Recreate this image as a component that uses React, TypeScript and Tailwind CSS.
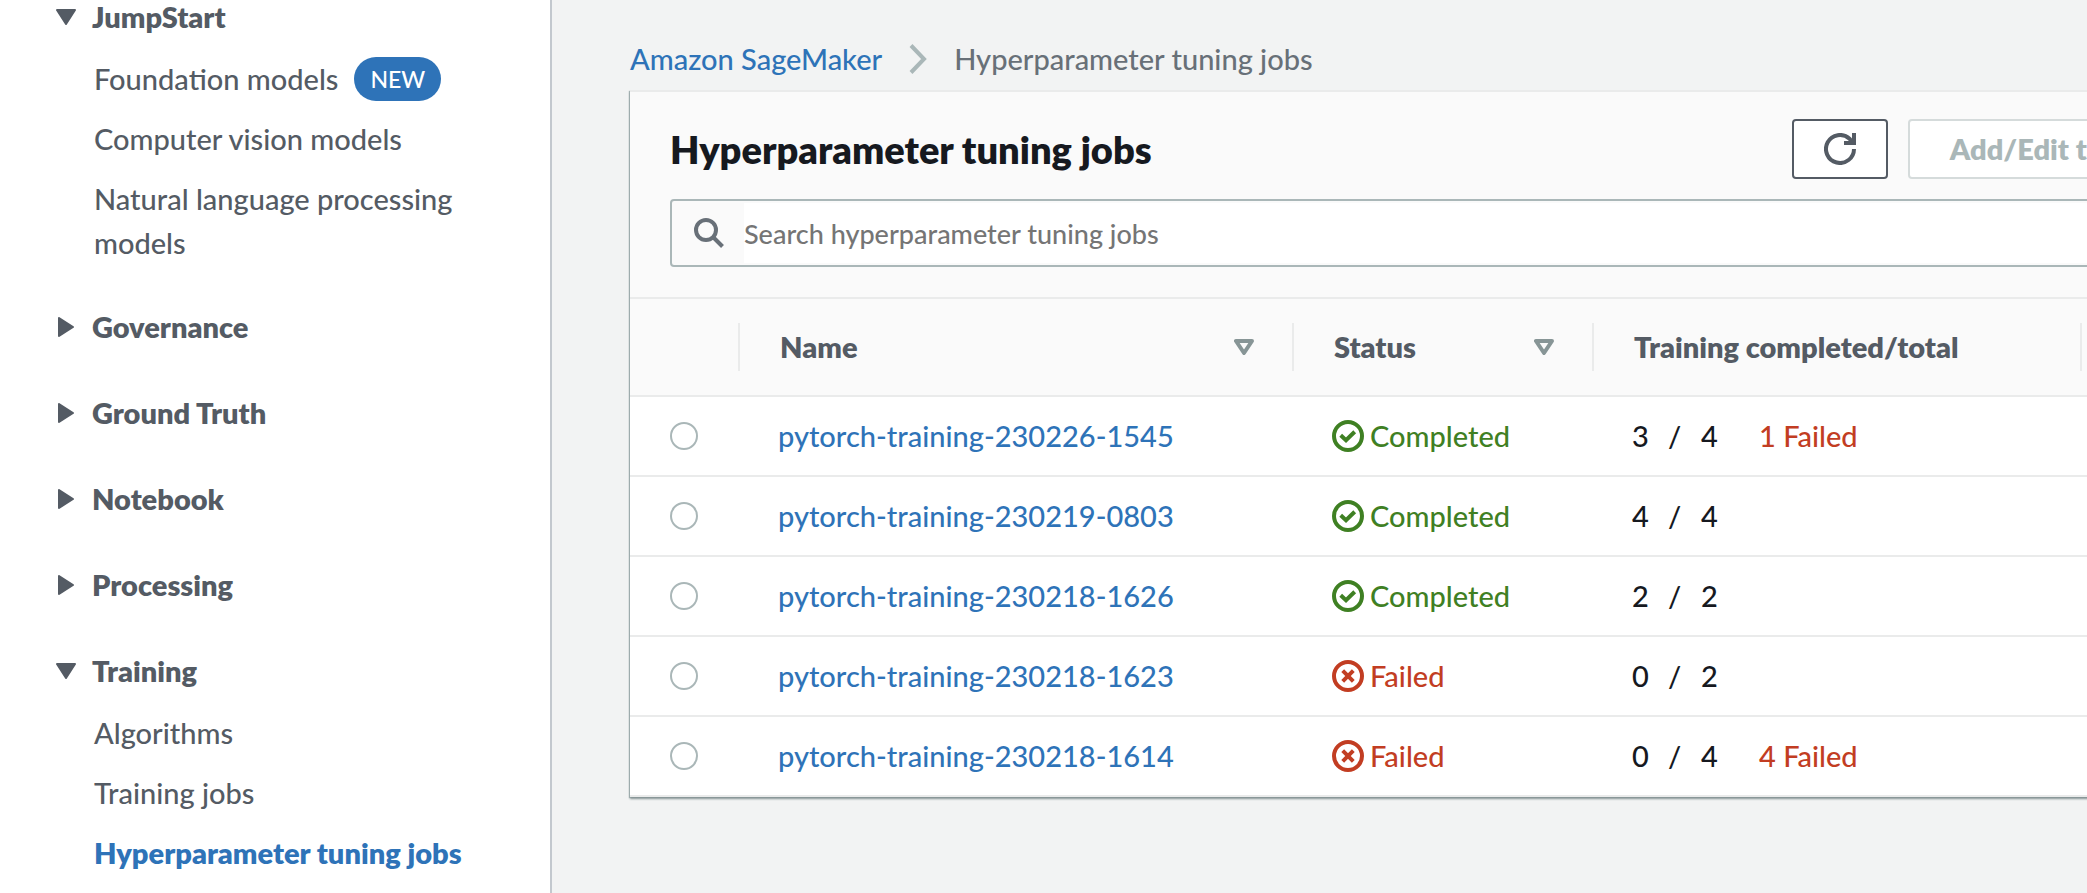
import type { ReactNode } from "react";

type Job = {
  name: string;
  status: "Completed" | "Failed";
  done: number;
  total: number;
  failed?: number;
};

const jobs: Job[] = [
  { name: "pytorch-training-230226-1545", status: "Completed", done: 3, total: 4, failed: 1 },
  { name: "pytorch-training-230219-0803", status: "Completed", done: 4, total: 4 },
  { name: "pytorch-training-230218-1626", status: "Completed", done: 2, total: 2 },
  { name: "pytorch-training-230218-1623", status: "Failed", done: 0, total: 2 },
  { name: "pytorch-training-230218-1614", status: "Failed", done: 0, total: 4, failed: 4 },
];

function SectionArrow({ open }: { open: boolean }) {
  return (
    <svg viewBox="0 0 20 20" className="h-5 w-5 shrink-0 fill-[#545b64] stroke-[#545b64]" strokeWidth="2" strokeLinejoin="round" aria-hidden="true">
      {open ? <path d="M1 3h18L10 17z" /> : <path d="M3 1v18L17 10z" />}
    </svg>
  );
}

function SortArrow() {
  return (
    <svg viewBox="0 0 20 16" className="h-4 w-5 shrink-0 fill-none stroke-[#879596]" strokeWidth="4" strokeLinejoin="round" aria-hidden="true">
      <path d="M2 2h16L10 14z" />
    </svg>
  );
}

function StatusIcon({ status }: { status: Job["status"] }) {
  return (
    <svg viewBox="0 0 32 32" className="h-8 w-8 shrink-0 fill-none stroke-current" strokeWidth="4" aria-hidden="true">
      <circle cx="16" cy="16" r="14" />
      {status === "Completed" ? <path d="M8.700 15.300l5.300 5 8.700-8.500" /> : <path d="M10.700 10.700l10.600 10.600M21.300 10.700l-10.600 10.600" />}
    </svg>
  );
}

function NavSection({ title, open = false, children }: { title: string; open?: boolean; children?: ReactNode }) {
  return (
    <section>
      <button type="button" aria-expanded={open} className="flex items-center gap-4 font-extrabold leading-[44px]">
        <SectionArrow open={open} />
        {title}
      </button>
      {children && <ul className="-mb-0.5 mt-[18px] flex flex-col gap-4 pl-[38px] pr-[50px]">{children}</ul>}
    </section>
  );
}

function NavItem({ children, active = false, badge }: { children: ReactNode; active?: boolean; badge?: string }) {
  return (
    <li className="flex items-center gap-4 leading-[44px]">
      <a href="#" aria-current={active ? "page" : undefined} className={active ? "font-extrabold text-[#2e73b8]" : ""}>
        {children}
      </a>
      {badge && <span className="h-[44px] rounded-full bg-[#2e73b8] px-4 text-[23px] text-white">{badge}</span>}
    </li>
  );
}

function HeaderCell({ children, sortable = false }: { children: ReactNode; sortable?: boolean }) {
  return (
    <th scope="col" className="h-[98px] border-b-2 border-[#eaebeb] p-0 text-left font-extrabold">
      <div className="flex h-12 items-center justify-between border-l-2 border-[#eaebeb] pl-10 pr-[38px]">
        {children}
        {sortable && <SortArrow />}
      </div>
    </th>
  );
}

export default function App() {
  return (
    <div className="flex h-screen overflow-hidden bg-[#f2f3f3] font-['Lato','Noto_Sans',sans-serif] text-[29px] font-medium leading-[44px] text-[#16191f]">
      <nav aria-label="SageMaker" className="w-[552px] shrink-0 overflow-hidden border-r-2 border-[#c3c8ce] bg-white pl-14 text-[#545b64]">
        <div className="-mt-[5px] flex flex-col gap-[42px]">
          <NavSection title="JumpStart" open>
            <NavItem badge="NEW">Foundation models</NavItem>
            <NavItem>Computer vision models</NavItem>
            <NavItem>Natural language processing models</NavItem>
          </NavSection>
          <NavSection title="Governance" />
          <NavSection title="Ground Truth" />
          <NavSection title="Notebook" />
          <NavSection title="Processing" />
          <NavSection title="Training" open>
            <NavItem>Algorithms</NavItem>
            <NavItem>Training jobs</NavItem>
            <NavItem active>Hyperparameter tuning jobs</NavItem>
          </NavSection>
        </div>
      </nav>

      <main className="min-w-0 flex-1 overflow-hidden pl-[78px] pt-[37px]">
        <nav aria-label="Breadcrumb" className="mb-[9px] flex items-center gap-[27px]">
          <a href="#" className="text-[#2e73b8]">Amazon SageMaker</a>
          <svg viewBox="0 0 18 30" className="h-[30px] w-[18px] fill-none stroke-[#aab7b8]" strokeWidth="4" aria-hidden="true">
            <path d="M2 1.500L15 15 2 28.500" />
          </svg>
          <span className="text-[#687078]">Hyperparameter tuning jobs</span>
        </nav>

        <section className="min-w-[1582px] border-t-2 border-[#eaebeb] bg-white shadow-[0_2px_2px_0_#879596,-1px_1px_1px_0_#aab7b8]">
          <div className="border-b-2 border-[#eaebeb] bg-[#fafafa] px-10 pb-[30px] pt-[27px]">
            <div className="mb-5 flex items-center justify-between">
              <h1 className="text-[38px] font-extrabold leading-[44px]">Hyperparameter tuning jobs</h1>
              <div className="flex gap-5">
                <button type="button" aria-label="Refresh" className="flex h-[60px] w-24 items-center justify-center rounded-[4px] border-2 border-[#545b64] bg-white">
                  <svg viewBox="0 0 32 32" className="h-8 w-8 fill-none stroke-[#545b64]" strokeWidth="4" aria-hidden="true">
                    <path d="M30 16a14 14 0 1 1-4.500-10.300L29 10M30 0v10H20" />
                  </svg>
                </button>
                <button type="button" disabled className="h-[60px] w-[264px] rounded-[4px] border-2 border-[#d5dbdb] bg-white font-extrabold text-[#aab7b8]">
                  Add/Edit tags
                </button>
              </div>
            </div>
            <div className="flex h-[68px] items-center rounded-[4px] border-2 border-[#aab7b8] bg-[#fafafa] py-0.5">
              <svg viewBox="0 0 30 30" className="ml-[22px] mr-5 h-[30px] w-[30px] shrink-0 fill-none stroke-[#687078]" strokeWidth="4" aria-hidden="true">
                <circle cx="12" cy="12" r="10" />
                <path d="M19 19l9.500 9.500" />
              </svg>
              <input
                type="search"
                aria-label="Search hyperparameter tuning jobs"
                placeholder="Search hyperparameter tuning jobs"
                className="h-full min-w-0 flex-1 bg-white text-[27px] outline-none placeholder:text-[#757575]"
              />
            </div>
          </div>

          <table className="w-full table-fixed border-separate border-spacing-0">
            <colgroup>
              <col className="w-[108px]" />
              <col className="w-[554px]" />
              <col className="w-[300px]" />
              <col className="w-[488px]" />
              <col />
            </colgroup>
            <thead className="bg-[#fafafa] text-[#545b64]">
              <tr>
                <td className="border-b-2 border-[#eaebeb]" />
                <HeaderCell sortable>Name</HeaderCell>
                <HeaderCell sortable>Status</HeaderCell>
                <HeaderCell>Training completed/total</HeaderCell>
                <HeaderCell>{null}</HeaderCell>
              </tr>
            </thead>
            <tbody>
              {jobs.map((job) => (
                <tr key={job.name} className="h-20 *:border-b-2 *:border-[#eaebeb]">
                  <td className="pl-10">
                    <input
                      type="radio"
                      name="job"
                      aria-label={`Select ${job.name}`}
                      className="block h-7 w-7 appearance-none rounded-full border-2 border-[#aab7b8] bg-white checked:border-8 checked:border-[#2e73b8]"
                    />
                  </td>
                  <td className="pl-10">
                    <a href="#" className="text-[#2e73b8]">{job.name}</a>
                  </td>
                  <td className="pl-10">
                    <span className={job.status === "Completed" ? "flex items-center gap-1.5 text-[#3f8023]" : "flex items-center gap-1.5 text-[#c23d22]"}>
                      <StatusIcon status={job.status} />
                      {job.status}
                    </span>
                  </td>
                  <td className="pl-10">
                    <div className="flex">
                      <span className="w-9">{job.done}</span>
                      <span className="w-[33px]">/</span>
                      <span className="w-[58px]">{job.total}</span>
                      {job.failed && <span className="text-[#c23d22]">{job.failed} Failed</span>}
                    </div>
                  </td>
                  <td />
                </tr>
              ))}
            </tbody>
          </table>
        </section>
      </main>
    </div>
  );
}
